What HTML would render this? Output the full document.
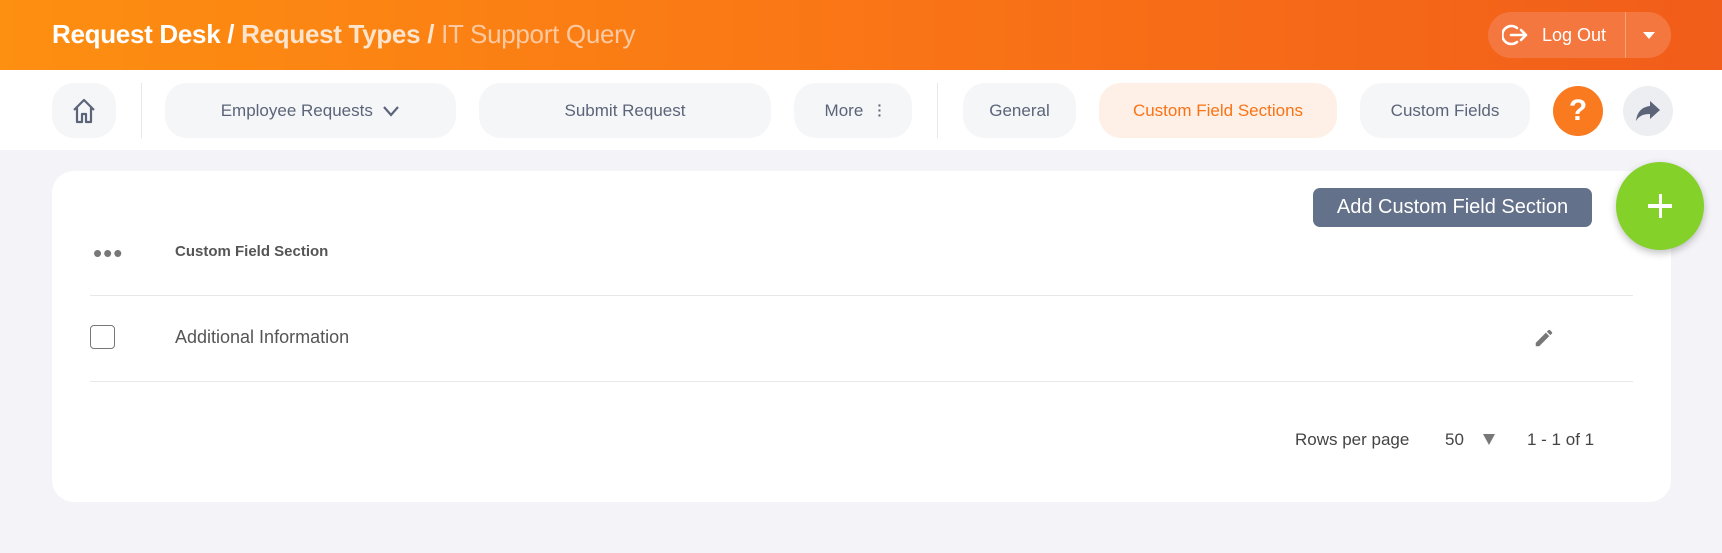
<!DOCTYPE html>
<html><head><style>
*{box-sizing:border-box;margin:0;padding:0}
body{width:1722px;height:553px;overflow:hidden;background:#f4f4f8;font-family:"Liberation Sans",sans-serif;position:relative}
.hdr{position:absolute;left:0;top:0;width:1722px;height:70px;background:linear-gradient(90deg,#fd8f11,#f97316 55%,#f15d1a)}
.title{position:absolute;left:52px;top:19px;font-size:26px;color:#fff;font-weight:bold;letter-spacing:-0.3px}
.title .b{font-weight:bold;color:#fde4cc}.title .c{font-weight:normal;color:#fcc9a0}
.logout{position:absolute;left:1488px;top:12px;width:183px;height:46px;border-radius:23px;background:#f4773f;color:#fff;font-size:18px}
.nav{position:absolute;left:0;top:70px;width:1722px;height:80px;background:#fff}
.pill{position:absolute;top:13px;height:55px;border-radius:22px;background:#f5f6f8;color:#5b6478;font-size:17px;display:flex;align-items:center;justify-content:center}
.vd{position:absolute;top:13px;width:1px;height:55px;background:#e6e8ec}
.card{position:absolute;left:52px;top:171px;width:1619px;height:331px;background:#fff;border-radius:22px}
.t{position:absolute;color:#555}
</style></head><body>
<div class="hdr">
 <div class="title">Request Desk / <span class="b">Request Types</span> <span class="b">/</span> <span class="c">IT Support Query</span></div>
 <div class="logout">
  <svg style="position:absolute;left:14px;top:11px" width="26" height="24" viewBox="0 0 26 24" fill="none" stroke="#fff" stroke-width="2.6" stroke-linecap="round" stroke-linejoin="round"><path d="M15 5A9 9 0 1 0 15 19"/><path d="M9 12H24M19 7l5 5-5 5"/></svg>
  <span style="position:absolute;left:54px;top:13px">Log Out</span>
  <div style="position:absolute;left:137px;top:0;width:1px;height:46px;background:#f9a27a"></div>
  <div style="position:absolute;left:155px;top:20px;border-left:6px solid transparent;border-right:6px solid transparent;border-top:7px solid #fff"></div>
 </div>
</div>
<div class="nav">
 <div class="pill" style="left:52px;width:64px"><svg width="28" height="28" viewBox="0 0 28 28" fill="none" stroke="#5b6478" stroke-width="2.2" stroke-linejoin="round"><path d="M4 13L14 3l10 10M7 10v15h5v-8h4v8h5V10"/></svg></div>
 <div class="vd" style="left:141px"></div>
 <div class="pill" style="left:165px;width:291px">Employee Requests&nbsp;&nbsp;<svg width="18" height="12" viewBox="0 0 18 12" fill="none" stroke="#5b6478" stroke-width="2.2"><path d="M2 2l7 8 7-8"/></svg></div>
 <div class="pill" style="left:479px;width:292px">Submit Request</div>
 <div class="pill" style="left:794px;width:118px">More&nbsp;&nbsp;&nbsp;<span style="font-weight:bold;font-size:14px;line-height:5px;display:inline-block;width:4px">·<br>·<br>·</span></div>
 <div class="vd" style="left:937px"></div>
 <div class="pill" style="left:963px;width:113px">General</div>
 <div class="pill" style="left:1099px;width:238px;background:#fef0e6;color:#f97316">Custom Field Sections</div>
 <div class="pill" style="left:1360px;width:170px">Custom Fields</div>
 <div class="pill" style="left:1553px;top:16px;width:50px;height:50px;border-radius:25px;background:#f97a1f;color:#fff;font-size:30px;font-weight:bold">?</div>
 <div class="pill" style="left:1623px;top:16px;width:50px;height:50px;border-radius:25px;background:#edeef1"><svg width="26" height="22" viewBox="0 0 26 22"><path d="M15 1l10 9-10 9v-5C8 14 4 16 1 21 2 13 6 7 15 6z" fill="#5b6478"/></svg></div>
</div>
<div class="card">
 <div class="t" style="left:41px;top:72px;font-size:26px;color:#777;letter-spacing:1px;line-height:20px">•••</div>
 <div class="t" style="left:123px;top:72px;font-size:15px;font-weight:bold">Custom Field Section</div>
 <div style="position:absolute;left:38px;top:124px;width:1543px;height:1px;background:#e8e8e8"></div>
 <div style="position:absolute;left:38px;top:154px;width:25px;height:24px;border:1.5px solid #777;border-radius:4px"></div>
 <div class="t" style="left:123px;top:156px;font-size:18px">Additional Information</div>
 <svg style="position:absolute;left:1481px;top:156px" width="22" height="22" viewBox="0 0 24 24"><path d="M3 17.25V21h3.75L17.81 9.94l-3.75-3.75L3 17.25zM20.71 7.04a1 1 0 000-1.41l-2.34-2.34a1 1 0 00-1.41 0l-1.83 1.83 3.75 3.75 1.83-1.83z" fill="#777"/></svg>
 <div style="position:absolute;left:38px;top:210px;width:1543px;height:1px;background:#e8e8e8"></div>
 <div class="t" style="left:1243px;top:259px;font-size:17px;color:#444">Rows per page</div>
 <div class="t" style="left:1393px;top:259px;font-size:17px;color:#444">50</div>
 <div style="position:absolute;left:1431px;top:263px;border-left:6px solid transparent;border-right:6px solid transparent;border-top:11px solid #777"></div>
 <div class="t" style="left:1475px;top:259px;font-size:17px;color:#444">1 - 1 of 1</div>
</div>
<div style="position:absolute;left:1313px;top:188px;width:279px;height:39px;border-radius:7px;background:#64718a;color:#fff;font-size:20px;display:flex;align-items:center;justify-content:center">Add Custom Field Section</div>
<div style="position:absolute;left:1616px;top:162px;width:88px;height:88px;border-radius:44px;background:#84d12a;box-shadow:0 3px 8px rgba(0,0,0,.25)">
 <div style="position:absolute;left:32px;top:42px;width:24px;height:3.5px;background:#fff"></div>
 <div style="position:absolute;left:42.5px;top:32px;width:3.5px;height:24px;background:#fff"></div>
</div>
</body></html>
